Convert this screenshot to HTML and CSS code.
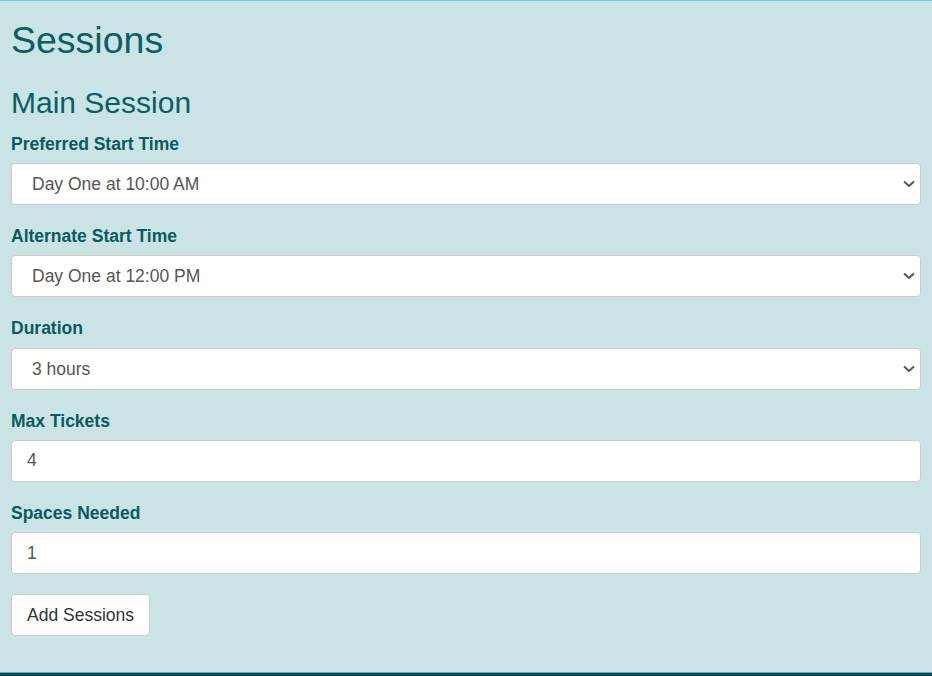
FILE: index.html
```html
<!DOCTYPE html>
<html>
<head>
<meta charset="utf-8">
<link rel="stylesheet" href="styles.css">
</head>
<body>
<div class="page">
  <h1 class="title">Sessions</h1>
  <h2 class="subtitle">Main Session</h2>
  <form class="form">
    <div class="field">
      <label class="label">Preferred Start Time</label>
      <div class="select-wrap">
        <select class="control select"><option>Day One at 10:00 AM</option></select>
        <svg class="chevron" width="12" height="8" viewBox="0 0 12 8"><path d="M1 1.5 L6 6 L11 1.5" fill="none" stroke="#555" stroke-width="2"/></svg>
      </div>
    </div>
    <div class="field">
      <label class="label">Alternate Start Time</label>
      <div class="select-wrap">
        <select class="control select"><option>Day One at 12:00 PM</option></select>
        <svg class="chevron" width="12" height="8" viewBox="0 0 12 8"><path d="M1 1.5 L6 6 L11 1.5" fill="none" stroke="#555" stroke-width="2"/></svg>
      </div>
    </div>
    <div class="field">
      <label class="label">Duration</label>
      <div class="select-wrap">
        <select class="control select"><option>3 hours</option></select>
        <svg class="chevron" width="12" height="8" viewBox="0 0 12 8"><path d="M1 1.5 L6 6 L11 1.5" fill="none" stroke="#555" stroke-width="2"/></svg>
      </div>
    </div>
    <div class="field">
      <label class="label">Max Tickets</label>
      <input class="control input" type="text" value="4">
    </div>
    <div class="field">
      <label class="label">Spaces Needed</label>
      <input class="control input" type="text" value="1">
    </div>
    <div class="actions">
      <button type="button" class="btn">Add Sessions</button>
    </div>
  </form>
</div>
<div class="footer-bar"></div>
</body>
</html>
```
FILE: styles.css
```css
html, body {
  margin: 0;
  padding: 0;
}
body {
  background: #cae4e5;
  font-family: "Liberation Sans", Arial, sans-serif;
  border-top: 1px solid #7fcdd4;
  min-height: 676px;
  box-sizing: border-box;
  display: flex;
  flex-direction: column;
}
.page {
  padding: 0 11px;
  flex: 1;
}
.title {
  margin: 18px 0 0;
  font-size: 37.5px;
  font-weight: normal;
  line-height: 42px;
  color: #0b5e66;
}
.subtitle {
  margin: 25px 0 0;
  font-size: 30px;
  font-weight: normal;
  line-height: 34px;
  color: #0b5e66;
}
.form {
  display: flex;
  flex-direction: column;
  margin-top: 1px;
}
.field {
  display: flex;
  flex-direction: column;
  margin-bottom: 8px;
}
.label {
  font-size: 17.5px;
  font-weight: bold;
  color: #0b5a60;
  line-height: 20.2px;
  margin: 13px 0 9px;
}
.select-wrap {
  position: relative;
}
.control {
  box-sizing: border-box;
  width: 100%;
  height: 42px;
  background: #fff;
  border: 1px solid #cccccc;
  border-radius: 4px;
  font-family: "Liberation Sans", Arial, sans-serif;
  font-size: 17.5px;
  color: #555;
  padding: 0 20px;
  margin: 0;
  outline: none;
}
.input {
  padding: 0 15px;
}
.select {
  -webkit-appearance: none;
  appearance: none;
}
.chevron {
  position: absolute;
  right: 6px;
  top: 17px;
  pointer-events: none;
}
.actions {
  margin-top: 12px;
}
.btn {
  height: 42px;
  padding: 0 15px;
  background: #fff;
  border: 1px solid #cccccc;
  border-radius: 4px;
  font-family: "Liberation Sans", Arial, sans-serif;
  font-size: 17.5px;
  color: #333;
}
.footer-bar {
  height: 3px;
  background: #0f4c5a;
  border-top: 1px solid #5fa8b2;
}
```
